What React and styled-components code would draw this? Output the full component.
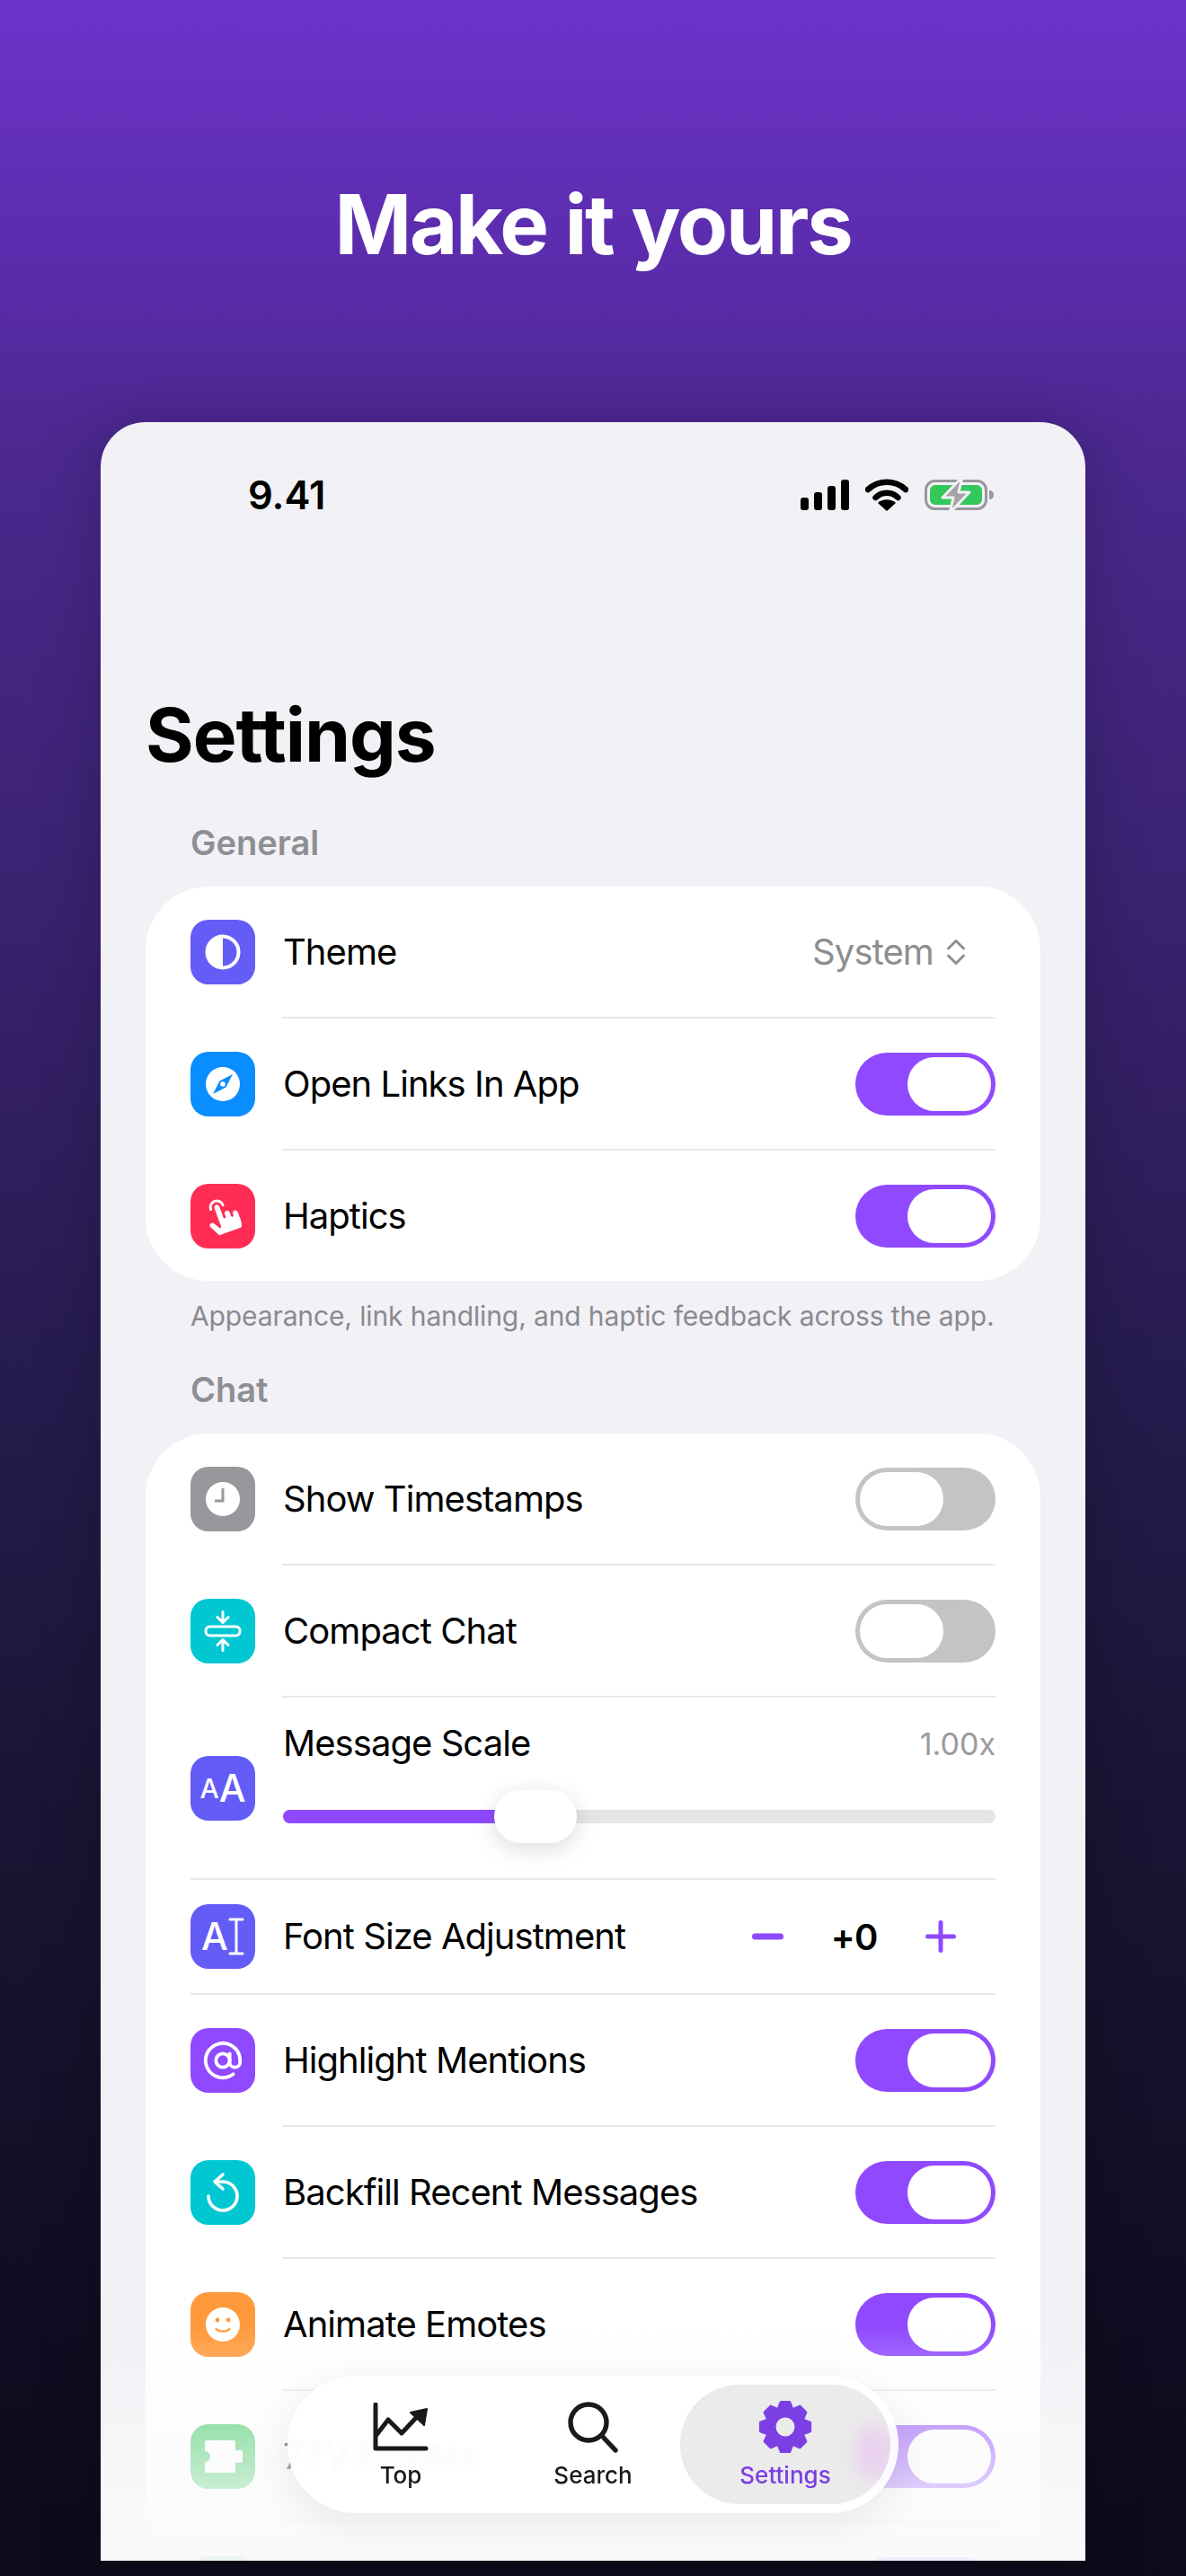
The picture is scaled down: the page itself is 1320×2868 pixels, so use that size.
import React from "react";
import styled, { createGlobalStyle } from "styled-components";
import { AtSign } from "lucide-react";
import { PiHandTapFill } from "react-icons/pi";

const GlobalStyle = createGlobalStyle`
  html, body {
    margin: 0;
    padding: 0;
    background: #0c0a1a;
  }
  * {
    box-sizing: border-box;
  }
`;

const Page = styled.div`
  width: 1320px;
  height: 2868px;
  overflow: hidden;
  font-family: Inter, "Noto Sans", sans-serif;
  background: linear-gradient(
    180deg,
    #6c33ca 0,
    #5a2cab 300px,
    #4c288f 500px,
    #3a2270 1000px,
    #271c50 1500px,
    #1a1535 2000px,
    #131028 2400px,
    #0d0a1b 2868px
  );
`;

const Headline = styled.h1`
  margin: 0;
  height: 470px;
  padding-top: 194px;
  font-size: 92px;
  line-height: 112px;
  font-weight: 700;
  letter-spacing: -2.2px;
  text-align: center;
  color: #fff;
`;

const Panel = styled.div`
  position: relative;
  width: 1096px;
  height: 2381px;
  margin-left: 112px;
  overflow: hidden;
  border-radius: 50px 50px 0 0;
  background: #f1f1f6;
  box-shadow: 0 0 70px rgba(0, 0, 0, 0.22);
`;

const StatusBar = styled.div`
  display: flex;
  align-items: center;
  justify-content: space-between;
  height: 162px;
  padding: 0 101px 0 164px;
`;

const Time = styled.span`
  font-size: 43.5px;
  font-weight: 600;
  color: #000;
`;

const StatusIcons = styled.div`
  display: flex;
  align-items: center;
  gap: 18px;
`;

const Title = styled.h2`
  margin: 142px 0 51px 50px;
  font-size: 82px;
  line-height: 90px;
  font-weight: 700;
  letter-spacing: -1px;
  color: #000;
`;

const SectionLabel = styled.div`
  margin: 0 0 26px 100px;
  font-size: 38px;
  line-height: 46px;
  font-weight: 600;
  color: #8e8e93;
`;

const Card = styled.div`
  margin: 0 50px;
  border-radius: 70px;
  background: #fff;
`;

const Footnote = styled.p`
  margin: 20px 0 40px 100px;
  font-size: 30px;
  line-height: 38px;
  letter-spacing: -0.12px;
  color: #8a8a8e;
`;

const Row = styled.div`
  display: flex;
  align-items: center;
  height: ${(p) => p.$height || 145}px;
  padding: 0 50px;
`;

const Divider = styled.div`
  height: 2px;
  margin: 0 50px 0 ${(p) => (p.$full ? 50 : 152)}px;
  background: #e8e8ea;
`;

const IconTile = styled.div`
  display: flex;
  flex: none;
  align-items: center;
  justify-content: center;
  width: 72px;
  height: 72px;
  margin-right: 31px;
  border-radius: 20px;
  color: #fff;
  background: ${(p) => p.$color};
`;

const Label = styled.span`
  flex: 1;
  font-size: 40px;
  line-height: 48px;
  letter-spacing: -0.95px;
  color: #000;
`;

const TileText = styled.span`
  font-size: ${(p) => p.$size}px;
  line-height: 1;
  font-weight: 500;
`;

const Value = styled.div`
  display: flex;
  align-items: center;
  gap: 14px;
  margin-right: 33px;
  font-size: 40px;
  letter-spacing: -0.9px;
  color: #8e8e8e;
`;

const Track = styled.div`
  display: flex;
  flex: none;
  justify-content: ${(p) => (p.$on ? "flex-end" : "flex-start")};
  width: 156px;
  height: 70px;
  padding: 5px;
  border-radius: 35px;
  background: ${(p) => (p.$on ? "#9049ff" : "#c4c4c6")};
`;

const Thumb = styled.div`
  width: 93px;
  height: 60px;
  border-radius: 30px;
  background: #fff;
`;

const ScaleBody = styled.div`
  flex: 1;
  align-self: flex-start;
  padding-top: 27px;
`;

const ScaleHead = styled.div`
  display: flex;
  align-items: center;
  justify-content: space-between;
  margin-bottom: 50px;
`;

const ScaleValue = styled.span`
  font-size: 34px;
  color: #9a9a9e;
`;

const Slider = styled.div`
  position: relative;
  height: 15px;
  border-radius: 8px;
  background: #e5e5e7;
`;

const SliderFill = styled.div`
  height: 100%;
  border-radius: 8px 0 0 8px;
  background: #9049ff;
`;

const SliderThumb = styled.div`
  position: absolute;
  top: -22px;
  width: 92px;
  height: 59px;
  border-radius: 30px;
  background: #fff;
  box-shadow: 0 6px 26px rgba(0, 0, 0, 0.14);
`;

const Stepper = styled.div`
  display: flex;
  align-items: center;
  gap: 53px;
  margin-right: 44px;
`;

const StepValue = styled.span`
  font-size: 40px;
  font-weight: 600;
  letter-spacing: -0.5px;
  color: #000;
`;

const FadeOverlay = styled.div`
  position: absolute;
  left: 0;
  right: 0;
  bottom: 0;
  height: 261px;
  background: linear-gradient(
    180deg,
    rgba(250, 250, 251, 0) 0,
    rgba(250, 250, 251, 0.5) 42%,
    rgba(250, 250, 251, 0.75) 69%,
    rgba(249, 249, 250, 0.93) 100%
  );
`;

const TabBar = styled.nav`
  position: absolute;
  left: 208px;
  bottom: 53px;
  display: flex;
  width: 680px;
  height: 153px;
  padding: 10px 9px;
  overflow: hidden;
  border-radius: 77px;
  background: rgba(255, 255, 255, 0.92);
  backdrop-filter: blur(3px);
  box-shadow: 0 10px 44px rgba(0, 0, 0, 0.08);
`;

const Tab = styled.div`
  position: relative;
  display: flex;
  flex: none;
  flex-direction: column;
  align-items: center;
  width: 234px;
  height: 133px;
  border-radius: 66px;
  overflow: hidden;
  color: ${(p) => (p.$active ? "#7b3fe4" : "#1a1a1a")};
  background: ${(p) => (p.$active ? "#ebebeb" : "transparent")};

  & + & {
    margin-left: -20px;
  }
`;

const TabIcon = styled.div`
  display: flex;
  align-items: center;
  justify-content: center;
  height: 66px;
  margin-top: 14px;
`;

const TabLabel = styled.span`
  position: relative;
  margin-top: 5px;
  font-size: 26px;
  line-height: 32px;
  font-weight: 500;
`;

const ToggleGlow = styled.div`
  position: absolute;
  right: -6px;
  top: 46px;
  width: 46px;
  height: 60px;
  border-radius: 24px;
  background: #e9cdee;
  opacity: 0.85;
  filter: blur(9px);
`;

const HandGlyph = styled(PiHandTapFill)`
  transform: rotate(-20deg);
`;

const SignalIcon = () => (
  <svg width="54" height="34" viewBox="0 0 54 34" fill="#000">
    <rect x="0" y="20" width="9" height="14" rx="3" />
    <rect x="15" y="14" width="9" height="20" rx="3" />
    <rect x="30" y="7" width="9" height="27" rx="3" />
    <rect x="45" y="0" width="9" height="34" rx="3" />
  </svg>
);

const WifiIcon = () => (
  <svg width="48" height="36" viewBox="0 0 48 36" fill="none">
    <path d="M3 12 C15 1 33 1 45 12" stroke="#000" strokeWidth="6.5" strokeLinecap="round" />
    <path d="M11.5 21 C18.5 14 29.5 14 36.5 21" stroke="#000" strokeWidth="6.5" strokeLinecap="round" />
    <path d="M24 36 L14 27 C19 22 29 22 34 27 Z" fill="#000" />
  </svg>
);

const BatteryIcon = () => (
  <svg width="78" height="40" viewBox="0 0 78 40" fill="none">
    <rect x="1.5" y="4.5" width="67" height="31" rx="10" stroke="#98989c" strokeWidth="3" />
    <rect x="6" y="9" width="58" height="22" rx="6" fill="#34c759" />
    <path d="M72 15 C75 15 77 17 77 20 C77 23 75 25 72 25 Z" fill="#98989c" />
    <path
      d="M42 0 L20 23 H32 L28 40 L50 17 H38 Z"
      fill="#a3a3a8"
      stroke="#f1f1f6"
      strokeWidth="3"
      strokeLinejoin="round"
    />
  </svg>
);

const ThemeGlyph = () => (
  <svg width="40" height="40" viewBox="0 0 40 40">
    <circle cx="20" cy="20" r="17.5" fill="none" stroke="#fff" strokeWidth="4" />
    <path d="M20 2 A18 18 0 0 0 20 38 Z" fill="#fff" />
  </svg>
);

const CompassGlyph = () => (
  <svg width="40" height="40" viewBox="0 0 40 40">
    <circle cx="20" cy="20" r="19" fill="#fff" />
    <path d="M31 9 L23.5 23.5 L9 31 L16.5 16.5 Z" fill="#0a8dff" />
    <circle cx="20" cy="20" r="2.8" fill="#fff" />
  </svg>
);

const ClockGlyph = () => (
  <svg width="40" height="40" viewBox="0 0 40 40">
    <circle cx="20" cy="20" r="19" fill="#fff" />
    <path d="M20 8 V22 H11" fill="none" stroke="#98989c" strokeWidth="3" />
  </svg>
);

const CompactGlyph = () => (
  <svg width="42" height="46" viewBox="0 0 42 46" fill="none" stroke="#fff" strokeWidth="3" strokeLinecap="round" strokeLinejoin="round">
    <rect x="2" y="18" width="38" height="10" rx="4.5" />
    <path d="M21 1.5 V13 M15 7.5 L21 13.5 L27 7.5" />
    <path d="M21 44.5 V33 M15 38.5 L21 32.5 L27 38.5" />
  </svg>
);

const CursorGlyph = () => (
  <svg width="18" height="42" viewBox="0 0 18 42" fill="none" stroke="#fff" strokeWidth="3" strokeLinecap="round">
    <path d="M2 2 H16 M9 2 V40 M2 40 H16" />
  </svg>
);

const BackfillGlyph = () => (
  <svg width="72" height="72" viewBox="0 0 72 72" fill="none" stroke="#fff" strokeWidth="3.6" strokeLinecap="round" strokeLinejoin="round">
    <path d="M28 24 H36 A16 16 0 1 1 20 40" />
    <path d="M36 16 L27 24 L36 32" />
  </svg>
);

const SmileGlyph = () => (
  <svg width="40" height="40" viewBox="0 0 40 40">
    <circle cx="20" cy="20" r="19" fill="#fff" />
    <circle cx="14" cy="15" r="2.4" fill="#ff9a3c" />
    <circle cx="26" cy="15" r="2.4" fill="#ff9a3c" />
    <path d="M12.5 25 C16 28.5 24 28.5 27.5 25" fill="none" stroke="#ff9a3c" strokeWidth="2.4" strokeLinecap="round" />
  </svg>
);

const PuzzleGlyph = () => (
  <svg width="44" height="36" viewBox="0 0 44 36">
    <path
      d="M4 0 H34 A2 2 0 0 1 36 2 V12 A7 7 0 1 1 36 24 V34 A2 2 0 0 1 34 36 H4 A2 2 0 0 1 2 34 V24 A6 6 0 0 0 2 12 V2 A2 2 0 0 1 4 0 Z"
      fill="#fff"
    />
  </svg>
);

const ChevronsGlyph = () => (
  <svg width="22" height="30" viewBox="0 0 22 30" fill="none" stroke="#8e8e8e" strokeWidth="3" strokeLinecap="round" strokeLinejoin="round">
    <path d="M2.5 11 L11 2.5 L19.5 11" />
    <path d="M2.5 19 L11 27.5 L19.5 19" />
  </svg>
);

const MinusGlyph = () => (
  <svg width="35" height="8" viewBox="0 0 35 8">
    <rect width="35" height="7" y="0.5" rx="3.5" fill="#9049ff" />
  </svg>
);

const PlusGlyph = () => (
  <svg width="34" height="36" viewBox="0 0 34 36" fill="#9049ff">
    <rect x="0" y="15.5" width="34" height="5" rx="2.5" />
    <rect x="14.5" y="0" width="5" height="36" rx="2.5" />
  </svg>
);

const TopGlyph = () => (
  <svg width="62" height="54" viewBox="0 0 62 54" fill="none">
    <path
      d="M3 2 V51 H59 M4 36 L17 19 L32 34 L47 18"
      stroke="#1a1a1a"
      strokeWidth="5"
      strokeLinecap="round"
      strokeLinejoin="round"
    />
    <path d="M42 11 L60 7 L57 25 Z" fill="#1a1a1a" stroke="#1a1a1a" strokeWidth="2" strokeLinejoin="round" />
  </svg>
);

const SearchGlyph = () => (
  <svg width="58" height="58" viewBox="0 0 58 58" fill="none" stroke="#1a1a1a" strokeWidth="5.4" strokeLinecap="round">
    <circle cx="24" cy="24" r="20" />
    <path d="M38.5 38.5 L54 55" />
  </svg>
);

// eight teeth around the hole
const gearPath = () => {
  const points = [];
  for (let i = 0; i < 8; i++) {
    const mid = (i * Math.PI) / 4 - Math.PI / 2;
    [
      [-0.39, 21],
      [-0.17, 28],
      [0.17, 28],
      [0.39, 21],
    ].forEach(([offset, r]) => {
      points.push(`${(30 + r * Math.cos(mid + offset)).toFixed(2)} ${(30 + r * Math.sin(mid + offset)).toFixed(2)}`);
    });
  }
  return `M${points.join(" L")} Z M30 20 A10 10 0 1 0 30 40 A10 10 0 1 0 30 20 Z`;
};

const GearGlyph = () => (
  <svg width="60" height="60" viewBox="0 0 60 60">
    <path d={gearPath()} fill="#7b3fe4" fillRule="evenodd" stroke="#7b3fe4" strokeWidth="3" strokeLinejoin="round" />
    <circle cx="30" cy="30" r="10.5" fill="#ebebeb" />
  </svg>
);

const Toggle = ({ on }) => (
  <Track $on={on}>
    <Thumb />
  </Track>
);

const ToggleRow = ({ color, glyph, label, on }) => (
  <Row>
    <IconTile $color={color}>{glyph}</IconTile>
    <Label>{label}</Label>
    <Toggle on={on} />
  </Row>
);

const App = () => (
  <Page>
    <GlobalStyle />
    <Headline>Make it yours</Headline>
    <Panel>
      <StatusBar>
        <Time>9.41</Time>
        <StatusIcons>
          <SignalIcon />
          <WifiIcon />
          <BatteryIcon />
        </StatusIcons>
      </StatusBar>
      <Title>Settings</Title>

      <SectionLabel>General</SectionLabel>
      <Card>
        <Row>
          <IconTile $color="#645cf6">
            <ThemeGlyph />
          </IconTile>
          <Label>Theme</Label>
          <Value>
            System
            <ChevronsGlyph />
          </Value>
        </Row>
        <Divider />
        <ToggleRow color="#0a8dff" glyph={<CompassGlyph />} label="Open Links In App" on />
        <Divider />
        <ToggleRow color="#ff2d55" glyph={<HandGlyph size={46} />} label="Haptics" on />
      </Card>
      <Footnote>Appearance, link handling, and haptic feedback across the app.</Footnote>

      <SectionLabel>Chat</SectionLabel>
      <Card>
        <ToggleRow color="#98989c" glyph={<ClockGlyph />} label="Show Timestamps" />
        <Divider />
        <ToggleRow color="#00c7d1" glyph={<CompactGlyph />} label="Compact Chat" />
        <Divider />
        <Row $height={201}>
          <IconTile $color="#645cf6">
            <TileText $size={30}>A</TileText>
            <TileText $size={42}>A</TileText>
          </IconTile>
          <ScaleBody>
            <ScaleHead>
              <Label>Message Scale</Label>
              <ScaleValue>1.00x</ScaleValue>
            </ScaleHead>
            <Slider>
              <SliderFill style={{ width: "31%" }} />
              <SliderThumb style={{ left: "29.6%" }} />
            </Slider>
          </ScaleBody>
        </Row>
        <Divider $full />
        <Row $height={126}>
          <IconTile $color="#645cf6">
            <TileText $size={42}>A</TileText>
            <CursorGlyph />
          </IconTile>
          <Label>Font Size Adjustment</Label>
          <Stepper>
            <MinusGlyph />
            <StepValue>+0</StepValue>
            <PlusGlyph />
          </Stepper>
        </Row>
        <Divider $full />
        <ToggleRow
          color="#9049ff"
          glyph={<AtSign size={46} strokeWidth={2} />}
          label="Highlight Mentions"
          on
        />
        <Divider />
        <ToggleRow color="#00c7d1" glyph={<BackfillGlyph />} label="Backfill Recent Messages" on />
        <Divider />
        <ToggleRow color="#ff9a3c" glyph={<SmileGlyph />} label="Animate Emotes" on />
        <Divider />
        <ToggleRow color="#34c759" glyph={<PuzzleGlyph />} label="7TV Emotes" on />
        <Divider />
        <ToggleRow color="#34c759" glyph={<PuzzleGlyph />} on />
      </Card>

      <FadeOverlay />
      <TabBar>
        <Tab>
          <TabIcon>
            <TopGlyph />
          </TabIcon>
          <TabLabel>Top</TabLabel>
        </Tab>
        <Tab>
          <TabIcon>
            <SearchGlyph />
          </TabIcon>
          <TabLabel>Search</TabLabel>
        </Tab>
        <Tab $active>
          <ToggleGlow />
          <TabIcon>
            <GearGlyph />
          </TabIcon>
          <TabLabel>Settings</TabLabel>
        </Tab>
      </TabBar>
    </Panel>
  </Page>
);

export default App;
